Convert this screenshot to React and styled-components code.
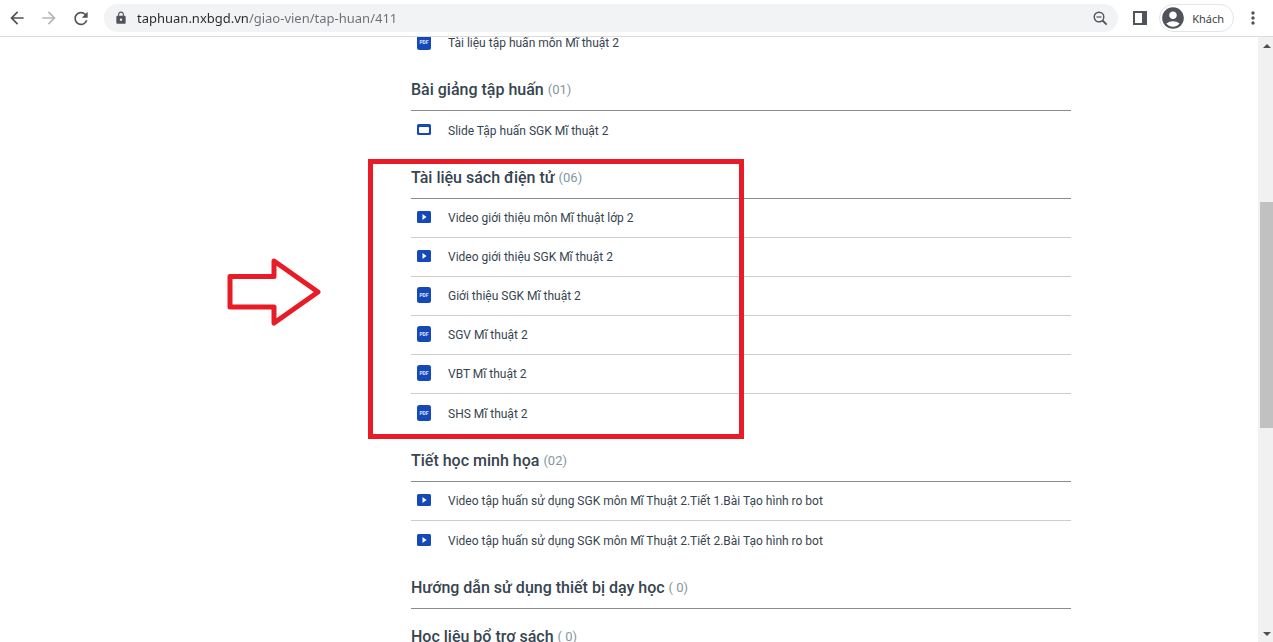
import React from 'react'
import styled, { createGlobalStyle } from 'styled-components'
import {
  MdArrowBack,
  MdArrowForward,
  MdRefresh,
  MdLock,
  MdAccountCircle,
  MdMoreVert
} from 'react-icons/md'

const GlobalStyle = createGlobalStyle`
  * {
    box-sizing: border-box;
  }
  body {
    margin: 0;
    background-color: #fff;
  }
  button, input {
    font: inherit;
  }
`

const Browser = styled.div`
  display: flex;
  flex-direction: column;
  height: 100vh;
  overflow: hidden;
  font-family: Roboto, Inter, sans-serif;
`

const Toolbar = styled.header`
  display: flex;
  flex: none;
  align-items: center;
  height: 37px;
  padding: 0 10px 0 7px;
  border-bottom: 1px solid #dadce0;
  font-family: 'Noto Sans', 'Open Sans', sans-serif;
`

const IconButton = styled.button`
  display: flex;
  align-items: center;
  justify-content: center;
  width: 20px;
  height: 28px;
  padding: 0;
  border: none;
  background: none;
  color: ${props => props.$muted ? '#b4b6b9' : '#50545a'};
`

const NavButtons = styled.nav`
  display: flex;
  gap: 12px;
  margin-right: 13px;
`

const AddressBar = styled.div`
  display: flex;
  flex: 1;
  align-items: center;
  gap: 9px;
  height: 28px;
  padding: 0 8px 0 10px;
  border-radius: 14px;
  background-color: #f1f3f4;
  color: #50545a;
`

/* host is dark, the path after it is grey */
const AddressInput = styled.input`
  flex: 1;
  min-width: 0;
  height: 24px;
  padding: 0;
  border: none;
  outline: none;
  font-size: 13px;
  background: linear-gradient(to right, #27292d 112px, #6a6e73 112px);
  background-clip: text;
  -webkit-background-clip: text;
  -webkit-text-fill-color: transparent;
`

const ToolbarEnd = styled.div`
  display: flex;
  align-items: center;
  gap: 9px;
  margin-left: 12px;
`

const ProfileButton = styled.button`
  display: flex;
  align-items: center;
  gap: 6px;
  height: 28px;
  padding: 0 9px 0 0;
  border: 1px solid #e3e5e8;
  border-radius: 14px;
  background-color: #fff;
  color: #3c4043;
  font-size: 11px;
  svg {
    color: #50545a;
  }
`

const Viewport = styled.div`
  display: flex;
  flex: 1;
  min-height: 0;
`

const Page = styled.main`
  flex: 1;
  min-width: 0;
  overflow: hidden;
`

const Container = styled.div`
  max-width: 884px;
  margin: -14px auto 0;
  padding-left: 224px;
`

const Section = styled.section`
  position: relative;
`

const SectionTitle = styled.h2`
  display: flex;
  align-items: center;
  gap: 4px;
  height: 49px;
  margin: 0;
  padding-top: 8px;
  border-bottom: 1px solid #8b8b8b;
  color: #36454f;
  font-size: 16px;
  font-weight: 500;
  line-height: 24px;
  white-space: pre;
`

const Count = styled.span`
  color: #8496a0;
  font-size: 13px;
  font-weight: 400;
`

const List = styled.ul`
  margin: 0;
  padding: 0;
  list-style: none;
`

const Item = styled.li`
  display: flex;
  height: 39px;
  border-bottom: 1px solid #ccc;
  &:last-child {
    border-bottom: none;
  }
`

const ItemLink = styled.a`
  display: flex;
  flex: 1;
  align-items: center;
  gap: 17px;
  padding-left: 6px;
  color: #36454f;
  font-size: 12px;
  text-decoration: none;
  svg {
    flex: none;
    margin-bottom: 2px;
  }
`

const Frame = styled.div`
  position: absolute;
  top: 9px;
  bottom: -6px;
  left: -43px;
  width: 376px;
  border: 5px solid #e81c27;
  pointer-events: none;
`

const Pointer = styled.svg`
  position: absolute;
  top: 107px;
  left: -185px;
`

const Scrollbar = styled.div`
  display: flex;
  flex: none;
  flex-direction: column;
  width: 15px;
  padding-left: 2px;
  background-color: #f1f1f1;
`

const ScrollArrow = styled.button`
  display: flex;
  flex: none;
  align-items: center;
  justify-content: center;
  height: 17px;
  padding: 0;
  border: none;
  background: none;
`

const Track = styled.div`
  flex: ${props => props.$size};
  background-color: ${props => props.$thumb ? '#c1c1c1' : 'transparent'};
`

const SidePanelIcon = () => (
  <svg width="14" height="14" viewBox="0 0 14 14">
    <path d="M1 1h12v12H1z" fill="none" stroke="#50545a" strokeWidth="2" />
    <path d="M9 1h4v12H9z" fill="#50545a" />
  </svg>
)

const ZoomOutIcon = () => (
  <svg width="15" height="15" viewBox="0 0 15 15" fill="none" stroke="#50545a">
    <circle cx="6" cy="6" r="4.8" strokeWidth="1.4" />
    <path d="M3.5 6h5" strokeWidth="1.2" />
    <path d="M9.5 9.5l4.2 4.2" strokeWidth="1.8" />
  </svg>
)

const PdfIcon = () => (
  <svg width="14" height="16" viewBox="0 0 14 16">
    <rect width="14" height="16" rx="2.5" fill="#1549b8" />
    <text x="7" y="10" fill="#dce5fa" fontSize="5" fontWeight="700" textAnchor="middle">PDF</text>
  </svg>
)

const VideoIcon = () => (
  <svg width="14" height="12" viewBox="0 0 14 12">
    <rect width="14" height="12" rx="1.5" fill="#1549b8" />
    <path d="M5.5 3v6l4-3z" fill="#fff" />
  </svg>
)

const SlideIcon = () => (
  <svg width="14" height="12" viewBox="0 0 14 12">
    <rect width="14" height="11" rx="1.5" fill="#1549b8" />
    <rect x="2" y="3" width="10" height="6" rx="1" fill="#fff" />
  </svg>
)

const icons = {
  pdf: PdfIcon,
  video: VideoIcon,
  slide: SlideIcon
}

const sections = [
  {
    title: 'Bài giảng tập huấn',
    count: '(01)',
    items: [{ type: 'slide', name: 'Slide Tập huấn SGK Mĩ thuật 2' }]
  },
  {
    title: 'Tài liệu sách điện tử',
    count: '(06)',
    marked: true,
    items: [
      { type: 'video', name: 'Video giới thiệu môn Mĩ thuật lớp 2' },
      { type: 'video', name: 'Video giới thiệu SGK Mĩ thuật 2' },
      { type: 'pdf', name: 'Giới thiệu SGK Mĩ thuật 2' },
      { type: 'pdf', name: 'SGV Mĩ thuật 2' },
      { type: 'pdf', name: 'VBT Mĩ thuật 2' },
      { type: 'pdf', name: 'SHS Mĩ thuật 2' }
    ]
  },
  {
    title: 'Tiết học minh họa',
    count: '(02)',
    items: [
      { type: 'video', name: 'Video tập huấn sử dụng SGK môn Mĩ Thuật 2.Tiết 1.Bài Tạo hình ro bot' },
      { type: 'video', name: 'Video tập huấn sử dụng SGK môn Mĩ Thuật 2.Tiết 2.Bài Tạo hình ro bot' }
    ]
  },
  { title: 'Hướng dẫn sử dụng thiết bị dạy học', count: '( 0)', items: [] },
  { title: 'Học liệu bổ trợ sách', count: '( 0)', items: [] }
]

const ItemList = ({ items }) => (
  <List>
    {items.map(item => {
      const Icon = icons[item.type]
      return (
        <Item key={item.name}>
          <ItemLink href="#"><Icon />{item.name}</ItemLink>
        </Item>
      )
    })}
  </List>
)

const App = () => (
  <Browser>
    <GlobalStyle />
    <Toolbar>
      <NavButtons>
        <IconButton aria-label="Back"><MdArrowBack size={20} /></IconButton>
        <IconButton aria-label="Forward" $muted><MdArrowForward size={20} /></IconButton>
        <IconButton aria-label="Reload"><MdRefresh size={21} /></IconButton>
      </NavButtons>
      <AddressBar>
        <MdLock size={14} />
        <AddressInput aria-label="Address" defaultValue="taphuan.nxbgd.vn/giao-vien/tap-huan/411" />
        <IconButton aria-label="Zoom"><ZoomOutIcon /></IconButton>
      </AddressBar>
      <ToolbarEnd>
        <IconButton aria-label="Side panel"><SidePanelIcon /></IconButton>
        <ProfileButton><MdAccountCircle size={26} />Khách</ProfileButton>
        <IconButton aria-label="Menu"><MdMoreVert size={20} /></IconButton>
      </ToolbarEnd>
    </Toolbar>
    <Viewport>
      <Page>
        <Container>
          <ItemList items={[{ type: 'pdf', name: 'Tài liệu tập huấn môn Mĩ thuật 2' }]} />
          {sections.map(section => (
            <Section key={section.title}>
              <SectionTitle>
                {section.title}
                <Count>{section.count}</Count>
              </SectionTitle>
              <ItemList items={section.items} />
              {section.marked && (
                <>
                  <Frame />
                  <Pointer width="98" height="70" viewBox="0 0 98 70">
                    <path
                      d="M4 19.5H48V4L92 35 48 66V50H4z"
                      fill="none"
                      stroke="#e81c27"
                      strokeWidth="5"
                      strokeLinejoin="round"
                    />
                  </Pointer>
                </>
              )}
            </Section>
          ))}
        </Container>
      </Page>
      <Scrollbar>
        <ScrollArrow aria-label="Scroll up">
          <svg width="8" height="4" viewBox="0 0 8 4"><path d="M0 4l4-4 4 4z" fill="#505050" /></svg>
        </ScrollArrow>
        <Track $size={148} />
        <Track $size={226} $thumb />
        <Track $size={197} />
        <ScrollArrow aria-label="Scroll down">
          <svg width="8" height="4" viewBox="0 0 8 4"><path d="M0 0l4 4 4-4z" fill="#505050" /></svg>
        </ScrollArrow>
      </Scrollbar>
    </Viewport>
  </Browser>
)

export default App
